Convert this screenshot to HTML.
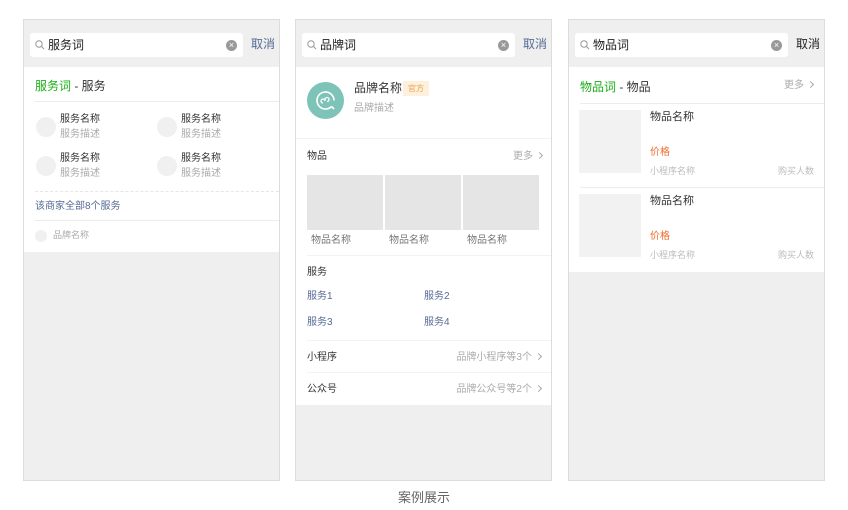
<!DOCTYPE html>
<html><head><meta charset="utf-8"><style>
*{margin:0;padding:0;box-sizing:border-box}
body{width:848px;height:510px;background:#fff;position:relative;overflow:hidden;font-family:"Liberation Sans","Noto Sans CJK SC",sans-serif;color:#333}
.p{position:absolute;top:19px;width:257px;height:462px;background:#efefef;border:1px solid #dcdcdc}
.a{position:absolute;white-space:nowrap;line-height:1}
.sb{position:absolute;left:6px;top:13px;width:213px;height:24px;background:#fff;border-radius:3px}
.cl{position:absolute;right:6px;top:7px;width:11px;height:11px;border-radius:50%;background:#999;color:#fff;font-size:9px;line-height:11px;text-align:center}
.w{position:absolute;left:0;top:47px;width:255px;background:#fff}
.ln{position:absolute;height:1px;background:#ececec}
.g{color:#aaa}
.bl{color:#576b95}
.cir{position:absolute;border-radius:50%;background:#f0f0f0}
.img{position:absolute;background:#e5e5e5}
.chev{display:inline-block;width:5px;height:5px;border-top:1px solid #aaa;border-right:1px solid #aaa;transform:rotate(45deg);margin-left:4px;vertical-align:1px}
</style></head><body>

<!-- panel 1 -->
<div class="p" style="left:23px">
 <div class="sb">
  <svg style="position:absolute;left:5px;top:7px" width="10" height="10" viewBox="0 0 10 10"><circle cx="4" cy="4" r="3.2" fill="none" stroke="#999" stroke-width="1"/><line x1="6.4" y1="6.4" x2="9" y2="9" stroke="#999" stroke-width="1"/></svg>
  <div class="a" style="left:18px;top:6px;font-size:12px;color:#222">服务词</div>
  <div class="cl">×</div>
 </div>
 <div class="a bl" style="left:227px;top:18px;font-size:12px">取消</div>
 <div class="w" style="height:185px">
  <div class="a" style="left:11px;top:13px;font-size:12px"><span style="color:#1aad19">服务词</span> - 服务</div>
  <div class="ln" style="left:11px;top:34px;width:244px"></div>
  <div class="cir" style="left:12px;top:50px;width:20px;height:20px"></div>
  <div class="a" style="left:36px;top:48px;font-size:10px">服务名称</div>
  <div class="a g" style="left:36px;top:63px;font-size:10px">服务描述</div>
  <div class="cir" style="left:133px;top:50px;width:20px;height:20px"></div>
  <div class="a" style="left:157px;top:48px;font-size:10px">服务名称</div>
  <div class="a g" style="left:157px;top:63px;font-size:10px">服务描述</div>
  <div class="cir" style="left:12px;top:89px;width:20px;height:20px"></div>
  <div class="a" style="left:36px;top:87px;font-size:10px">服务名称</div>
  <div class="a g" style="left:36px;top:102px;font-size:10px">服务描述</div>
  <div class="cir" style="left:133px;top:89px;width:20px;height:20px"></div>
  <div class="a" style="left:157px;top:87px;font-size:10px">服务名称</div>
  <div class="a g" style="left:157px;top:102px;font-size:10px">服务描述</div>
  <div style="position:absolute;left:11px;top:124px;width:244px;border-top:1px dashed #e6e6e6"></div>
  <div class="a bl" style="left:11px;top:135px;font-size:10px">该商家全部8个服务</div>
  <div class="ln" style="left:11px;top:153px;width:244px"></div>
  <div class="cir" style="left:11px;top:163px;width:12px;height:12px"></div>
  <div class="a g" style="left:29px;top:164px;font-size:9px">品牌名称</div>
 </div>
</div>

<!-- panel 2 -->
<div class="p" style="left:295px">
 <div class="sb">
  <svg style="position:absolute;left:5px;top:7px" width="10" height="10" viewBox="0 0 10 10"><circle cx="4" cy="4" r="3.2" fill="none" stroke="#999" stroke-width="1"/><line x1="6.4" y1="6.4" x2="9" y2="9" stroke="#999" stroke-width="1"/></svg>
  <div class="a" style="left:18px;top:6px;font-size:12px;color:#222">品牌词</div>
  <div class="cl">×</div>
 </div>
 <div class="a bl" style="left:227px;top:18px;font-size:12px">取消</div>
 <div class="w" style="height:338px">
  <svg style="position:absolute;left:11px;top:15px" width="37" height="37" viewBox="0 0 37 37"><circle cx="18.5" cy="18.5" r="18.5" fill="#7ec3b8"/><path d="M24.5 24.5A8.5 8.5 0 1 1 27 18.5" fill="none" stroke="#fff" stroke-width="1.6"/><line x1="24.5" y1="24.5" x2="27" y2="27" stroke="#fff" stroke-width="1.6"/><path d="M16 21a2 2 0 1 1 2-2v-1.5a2 2 0 1 1 2 2" fill="none" stroke="#fff" stroke-width="1.3"/></svg>
  <div class="a" style="left:58px;top:15px;font-size:12px">品牌名称</div>
  <div class="a" style="left:107px;top:14px;width:26px;height:15px;background:#fdf0dc;color:#e8a04b;font-size:8px;line-height:15px;text-align:center">官方</div>
  <div class="a g" style="left:58px;top:37px;font-size:10px">品牌描述</div>
  <div class="ln" style="left:0;top:71px;width:255px;background:#f2f2f2"></div>
  <div class="a" style="left:11px;top:85px;font-size:10px">物品</div>
  <div class="a g" style="left:217px;top:85px;font-size:10px">更多<span class="chev"></span></div>
  <div class="img" style="left:11px;top:108px;width:76px;height:55px"></div>
  <div class="img" style="left:89px;top:108px;width:76px;height:55px"></div>
  <div class="img" style="left:167px;top:108px;width:76px;height:55px"></div>
  <div class="a" style="left:15px;top:169px;font-size:10px;color:#777">物品名称</div>
  <div class="a" style="left:93px;top:169px;font-size:10px;color:#777">物品名称</div>
  <div class="a" style="left:171px;top:169px;font-size:10px;color:#777">物品名称</div>
  <div class="ln" style="left:11px;top:188px;width:244px;background:#f2f2f2"></div>
  <div class="a" style="left:11px;top:201px;font-size:10px">服务</div>
  <div class="a bl" style="left:11px;top:225px;font-size:10px">服务1</div>
  <div class="a bl" style="left:128px;top:225px;font-size:10px">服务2</div>
  <div class="a bl" style="left:11px;top:251px;font-size:10px">服务3</div>
  <div class="a bl" style="left:128px;top:251px;font-size:10px">服务4</div>
  <div class="ln" style="left:11px;top:273px;width:244px;background:#f2f2f2"></div>
  <div class="a" style="left:11px;top:286px;font-size:10px">小程序</div>
  <div class="a g" style="right:10px;top:286px;font-size:10px">品牌小程序等3个<span class="chev"></span></div>
  <div class="ln" style="left:11px;top:305px;width:244px;background:#f2f2f2"></div>
  <div class="a" style="left:11px;top:318px;font-size:10px">公众号</div>
  <div class="a g" style="right:10px;top:318px;font-size:10px">品牌公众号等2个<span class="chev"></span></div>
 </div>
</div>

<!-- panel 3 -->
<div class="p" style="left:568px">
 <div class="sb">
  <svg style="position:absolute;left:5px;top:7px" width="10" height="10" viewBox="0 0 10 10"><circle cx="4" cy="4" r="3.2" fill="none" stroke="#999" stroke-width="1"/><line x1="6.4" y1="6.4" x2="9" y2="9" stroke="#999" stroke-width="1"/></svg>
  <div class="a" style="left:18px;top:6px;font-size:12px;color:#222">物品词</div>
  <div class="cl">×</div>
 </div>
 <div class="a" style="left:227px;top:18px;font-size:12px;color:#222">取消</div>
 <div class="w" style="height:205px">
  <div class="a" style="left:11px;top:14px;font-size:12px"><span style="color:#1aad19">物品词</span> - 物品</div>
  <div class="a g" style="left:215px;top:14px;font-size:10px">更多<span class="chev"></span></div>
  <div class="ln" style="left:11px;top:36px;width:244px"></div>
  <div class="img" style="left:10px;top:43px;width:62px;height:63px;background:#f2f2f2"></div>
  <div class="a" style="left:81px;top:45px;font-size:11px">物品名称</div>
  <div class="a" style="left:81px;top:81px;font-size:10px;color:#f06c2a">价格</div>
  <div class="a" style="left:81px;top:100px;font-size:9px;color:#bbb">小程序名称</div>
  <div class="a" style="right:10px;top:100px;font-size:9px;color:#bbb">购买人数</div>
  <div class="ln" style="left:11px;top:120px;width:244px"></div>
  <div class="img" style="left:10px;top:127px;width:62px;height:63px;background:#f2f2f2"></div>
  <div class="a" style="left:81px;top:129px;font-size:11px">物品名称</div>
  <div class="a" style="left:81px;top:165px;font-size:10px;color:#f06c2a">价格</div>
  <div class="a" style="left:81px;top:184px;font-size:9px;color:#bbb">小程序名称</div>
  <div class="a" style="right:10px;top:184px;font-size:9px;color:#bbb">购买人数</div>
 </div>
</div>

<div class="a" style="left:0;width:848px;text-align:center;top:491px;font-size:13px;color:#666">案例展示</div>
</body></html>
